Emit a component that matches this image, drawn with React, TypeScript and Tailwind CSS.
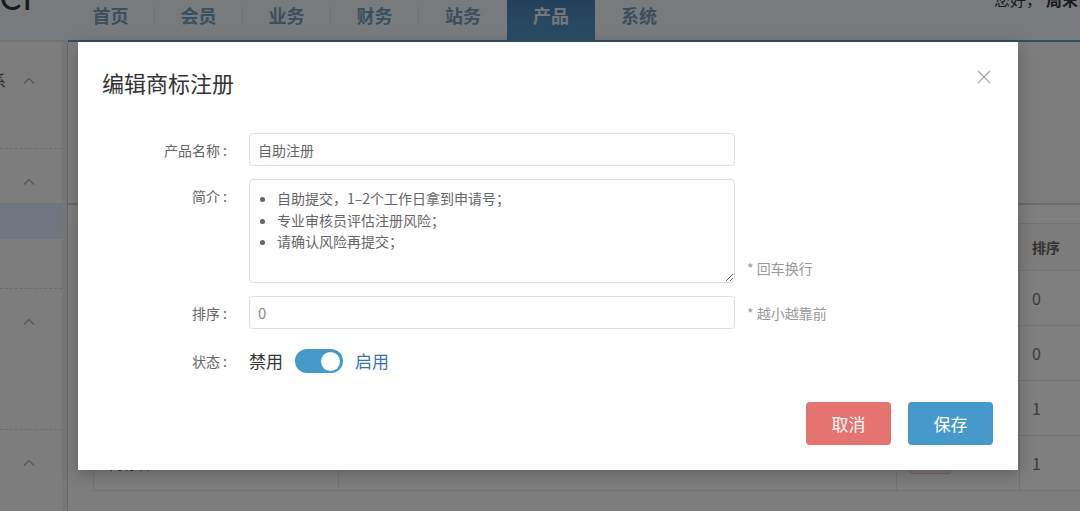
import React from 'react';

const tabs = ['首页', '会员', '业务', '财务', '站务', '产品', '系统'];

function ChevronUp() {
  return (
    <svg width="12" height="7" viewBox="0 0 12 7" fill="none" stroke="#a8a8a8" strokeWidth="1.2">
      <path d="M1 6.5 6 1.5l5 5" />
    </svg>
  );
}

function Header() {
  return (
    <div className="flex h-[40px] bg-[#f0f6fc]">
      <div className="w-[67px] shrink-0 overflow-hidden">
        <div className="-mt-[24px] -ml-[1px] text-[36px] leading-[36px] text-[#333]">CI</div>
      </div>
      {tabs.map((t, i) => (
        <div key={t} className="flex h-[40px] w-[88px] shrink-0 items-start">
          <div
            className={
              t === '产品'
                ? 'flex h-[40px] flex-1 justify-center bg-gradient-to-b from-[#4882b8] to-[#5698cc] pt-[5px] text-[18px] font-bold leading-[20px] text-[#e8eef4]'
                : 'flex h-[40px] flex-1 justify-center pt-[5px] text-[18px] font-bold leading-[20px] text-[#789cb6]'
            }
          >
            {t}
          </div>
          {i < tabs.length - 1 && t !== '站务' && t !== '产品' && (
            <div className="mt-[5px] h-[22px] w-px bg-[#dde5ec]" />
          )}
        </div>
      ))}
      <div className="ml-auto -mr-[30px] -mt-[11px] shrink-0 whitespace-nowrap text-[16px] leading-[20px] text-[#333]">
        <span className="mr-[4px]">您好，</span>
        <span className="font-bold">周末愉快</span>
      </div>
    </div>
  );
}

function Sidebar() {
  return (
    <div className="flex w-[68px] border-t-2 border-[#e2e2e2]">
      <div className="flex w-[62px] flex-col bg-[#fafafa]">
        <div className="flex h-[76px] items-center">
          <span className="-ml-[10px] w-[23px] text-[16px] text-[#555]">系</span>
          <span className="ml-[10px]">
            <ChevronUp />
          </span>
        </div>
        <div className="h-[30px]" />
        <div className="border-t border-dashed border-[#d8d8d8]">
          <div className="flex h-[54px] items-center pl-[23px] pt-[10px]">
            <ChevronUp />
          </div>
          <div className="-mr-[6px] h-[36px] bg-[#dceefe]" />
          <div className="h-[49px]" />
        </div>
        <div className="border-t border-dashed border-[#d8d8d8]">
          <div className="flex h-[64px] items-center pl-[23px]">
            <ChevronUp />
          </div>
          <div className="h-[76px]" />
        </div>
        <div className="border-t border-dashed border-[#d8d8d8]">
          <div className="flex h-[64px] items-center pl-[23px]">
            <ChevronUp />
          </div>
        </div>
      </div>
      <div className="w-[6px] border-r border-[#bed0e0] bg-[#eaeef2]" />
    </div>
  );
}

const rows = [
  { name: '商标注册', sort: '0' },
  { name: '商标续展', sort: '0' },
  { name: '商标变更', sort: '1' },
  { name: '商标转让', sort: '1', tag: true },
];

function Main() {
  return (
    <div className="flex-1 border-t-2 border-[#5aa0d0] bg-[#fbfbfb]">
      <div className="h-[161px]" />
      <div className="h-[20px] border-t-2 border-[#d4d4d4] bg-white" />
      <div className="ml-[25px] border-l border-[#e4e4e4] bg-white text-[14px] text-[#777]">
        <div className="flex h-[48px] items-center border-y border-[#e6e6e6] bg-[#f8f8f8] font-bold text-[#666]">
          <div className="w-[244px] pl-[12px]">产品名称</div>
          <div className="w-[558px] border-l border-[#e6e6e6] pl-[12px]">简介</div>
          <div className="w-[123px] border-l border-[#e6e6e6] pl-[12px]">状态</div>
          <div className="h-[48px] flex-1 border-l border-[#e6e6e6] pl-[12px] leading-[48px]">排序</div>
        </div>
        {rows.map((r) => (
          <div key={r.name} className="flex h-[55px] items-center border-b border-[#e6e6e6]">
            <div className="w-[244px] pl-[15px] text-[#333]">{r.name}</div>
            <div className="h-[54px] w-[558px] border-l border-[#e6e6e6]" />
            <div className="flex h-[54px] w-[123px] items-center border-l border-[#e6e6e6] pl-[12px]">
              {r.tag ? (
                <span className="rounded-[3px] border border-[#f3c4c4] bg-[#fdeeee] px-[8px] text-[12px] leading-[20px] text-[#e06666]">
                  禁用
                </span>
              ) : (
                <span className="rounded-[3px] border border-[#c4ddf3] bg-[#eef6fd] px-[8px] text-[12px] leading-[20px] text-[#4a9acb]">
                  启用
                </span>
              )}
            </div>
            <div className="flex h-[54px] flex-1 items-center border-l border-[#e6e6e6] pl-[12px] text-[16px]">
              {r.sort}
            </div>
          </div>
        ))}
      </div>
    </div>
  );
}

function CloseIcon() {
  return (
    <svg width="14" height="14" viewBox="0 0 14 14" fill="none" stroke="#a6a6a6" strokeWidth="1.2">
      <path d="M1 1l12 12M13 1 1 13" />
    </svg>
  );
}

function Modal() {
  return (
    <div className="absolute left-[78px] top-[42px] flex h-[428px] w-[940px] flex-col bg-white shadow-[0_4px_16px_rgba(0,0,0,0.25)]">
      <div className="flex items-start justify-between pl-[24px] pr-[27px] pt-[26px]">
        <h3 className="text-[22px] leading-[28px] text-[#333]">编辑商标注册</h3>
        <button className="mt-[2px] p-0">
          <CloseIcon />
        </button>
      </div>

      <div className="mt-[37px] flex flex-col text-[14px]">
        <div className="flex items-center">
          <label className="w-[153px] pr-[4px] text-right leading-[20px] text-[#666]">产品名称 :</label>
          <input
            readOnly
            value="自助注册"
            className="ml-[18px] h-[33px] w-[486px] rounded-[4px] border border-[#dcdfe6] px-[8px] text-[14px] text-[#666] outline-none"
          />
        </div>

        <div className="mt-[13px] flex items-start">
          <label className="w-[153px] pr-[4px] pt-[7px] text-right leading-[20px] text-[#666]">简介 :</label>
          <div className="ml-[18px] h-[104px] w-[486px] resize-y overflow-auto rounded-[4px] border border-[#dcdfe6] pl-[11px] pt-[8px]">
            <ul className="list-disc pl-[16px] leading-[21.5px] text-[#666] marker:text-[#666]">
              <li>自助提交，1–2个工作日拿到申请号；</li>
              <li>专业审核员评估注册风险；</li>
              <li>请确认风险再提交；</li>
            </ul>
          </div>
          <span className="ml-[12px] self-end pb-[5px] leading-[20px] text-[#999]">* 回车换行</span>
        </div>

        <div className="mt-[13px] flex items-center">
          <label className="w-[153px] pr-[4px] text-right leading-[20px] text-[#666]">排序 :</label>
          <input
            readOnly
            value="0"
            className="ml-[18px] h-[33px] w-[486px] rounded-[4px] border border-[#dcdfe6] px-[8px] text-[15px] text-[#888] outline-none"
          />
          <span className="ml-[12px] leading-[20px] text-[#999]">* 越小越靠前</span>
        </div>

        <div className="mt-[20px] flex h-[24px] items-center">
          <label className="w-[153px] pr-[4px] text-right leading-[20px] text-[#666]">状态 :</label>
          <span className="ml-[18px] text-[17px] text-[#333]">禁用</span>
          <span className="ml-[12px] flex h-[24px] w-[48px] items-center justify-end rounded-full bg-[#4699cb] pr-[3px]">
            <span className="h-[19px] w-[19px] rounded-full bg-white" />
          </span>
          <span className="ml-[12px] text-[17px] text-[#3a72b6]">启用</span>
        </div>
      </div>

      <div className="mt-[29px] flex justify-end gap-[17px] pr-[25px]">
        <button className="h-[43px] w-[85px] rounded-[4px] bg-[#e57470] text-[17px] text-white">取消</button>
        <button className="h-[43px] w-[85px] rounded-[4px] bg-[#4699cb] text-[17px] text-white">保存</button>
      </div>
    </div>
  );
}

export default function App() {
  return (
    <div className="relative h-[511px] w-[1080px] overflow-hidden bg-white font-[family-name:'Noto_Sans_CJK_SC','Noto_Sans',sans-serif]">
      <Header />
      <div className="flex h-[471px]">
        <Sidebar />
        <Main />
      </div>
      <div className="absolute inset-0 bg-black/50" />
      <Modal />
    </div>
  );
}
